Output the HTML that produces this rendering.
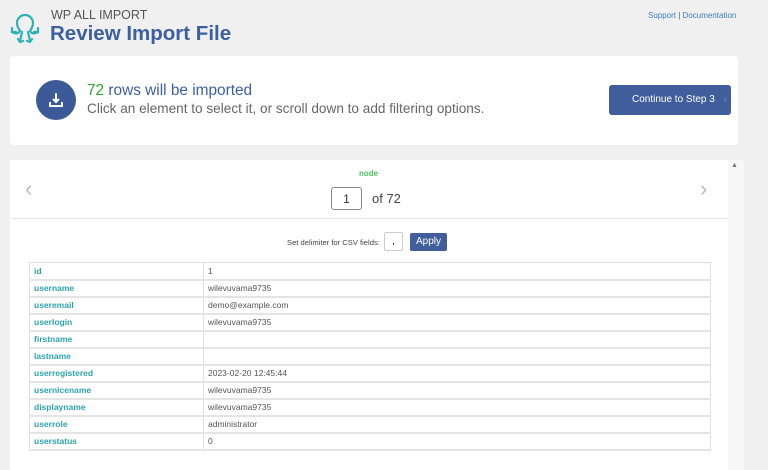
<!DOCTYPE html>
<html><head><meta charset="utf-8"><style>
*{margin:0;padding:0;box-sizing:border-box}
body{width:768px;height:465px;overflow:hidden;background:#f0f0f1;font-family:"Liberation Sans",sans-serif;position:relative}
.abs{position:absolute}
.p1{left:10px;top:56px;width:728px;height:89px;background:#fff;border-radius:4px}
.p2{left:10px;top:160px;width:718px;height:310px;background:#fff}
table{position:absolute;left:29px;top:262px;width:682px;border-collapse:collapse;font-size:8.5px}
td{height:17px;border:1px solid #e0e0e0;border-bottom:2px solid #e4e4e4;padding:0 4px;color:#555}
td:first-child{width:174px;color:#2ba3ad;font-weight:bold}
</style></head><body>
<svg class="abs" style="left:9px;top:9px" width="32" height="36" viewBox="0 0 32 36" fill="none" stroke="#2bb3b8" stroke-width="2.2" stroke-linecap="round">
<path d="M8 14a8 8 0 1 1 16 0c0 4-2 6-3 8M8 14c0 4 2 6 3 8"/><path d="M11 22c-2 3-5 3-8 1M21 22c2 3 5 3 8 1M13 23l-2 9M19 23l2 9"/><path d="M3 19v4h4M29 19v4h-4M9 30l2 3 3-1M23 30l-2 3-3-1"/>
</svg>
<div class="abs" style="left:51px;top:8px;font-size:12.5px;color:#555">WP ALL IMPORT</div>
<div class="abs" style="left:50px;top:22px;font-size:20.5px;font-weight:bold;color:#3c5fa0">Review Import File</div>
<div class="abs" style="left:648px;top:11px;font-size:8px;color:#3c7fc0">Support <span style="color:#555">|</span> Documentation</div>
<div class="abs p1"></div>
<div class="abs" style="left:36px;top:80px;width:40px;height:40px;border-radius:50%;background:#3c5a97"></div>
<svg class="abs" style="left:47px;top:91px" width="18" height="18" viewBox="0 0 18 18" fill="none" stroke="#fff" stroke-width="2"><path d="M9 2v9M6 8l3 3 3-3M3 11v4h12v-4"/></svg>
<div class="abs" style="left:87px;top:82px;font-size:15.4px;color:#3c5fa0"><span style="color:#2aa52e">72</span> rows will be imported</div>
<div class="abs" style="left:87px;top:101px;font-size:13.6px;color:#666">Click an element to select it, or scroll down to add filtering options.</div>
<div class="abs" style="left:609px;top:85px;width:122px;height:30px;background:#415e9c;border-radius:3px;color:#fff;font-size:10px;line-height:30px;padding-left:23px">Continue to Step 3 <span style="color:#7f95c3;margin-left:6px">›</span></div>
<div class="abs p2"></div>
<div class="abs" style="left:728px;top:160px;width:16px;height:310px;background:#f7f7f7"></div>
<div class="abs" style="left:731px;top:162px;font-size:7px;color:#777">▲</div>
<div class="abs" style="left:359px;top:169px;font-size:8px;font-weight:bold;color:#4bbf5a">node</div>
<div class="abs" style="left:25px;top:176px;font-size:22px;color:#bbb">‹</div>
<div class="abs" style="left:700px;top:176px;font-size:22px;color:#bbb">›</div>
<div class="abs" style="left:331px;top:187px;width:31px;height:23px;border:1px solid #888;border-radius:3px;font-size:12px;text-align:center;line-height:22px;color:#333">1</div>
<div class="abs" style="left:372px;top:191px;font-size:13px;color:#444">of 72</div>
<div class="abs" style="left:11px;top:218px;width:717px;height:1px;background:#e8e8e8"></div>
<div class="abs" style="left:287px;top:238px;font-size:7.6px;color:#444">Set delimiter for CSV fields:</div>
<div class="abs" style="left:384px;top:232px;width:19px;height:19px;border:1px solid #ccc;border-radius:2px;font-size:9px;text-align:center;line-height:16px">,</div>
<div class="abs" style="left:410px;top:233px;width:37px;height:18px;background:#415e9c;border-radius:2px;color:#fff;font-size:10px;text-align:center;line-height:18px">Apply</div>
<table>
<tr><td>id</td><td>1</td></tr>
<tr><td>username</td><td>wilevuvama9735</td></tr>
<tr><td>useremail</td><td>demo@example.com</td></tr>
<tr><td>userlogin</td><td>wilevuvama9735</td></tr>
<tr><td>firstname</td><td></td></tr>
<tr><td>lastname</td><td></td></tr>
<tr><td>userregistered</td><td>2023-02-20 12:45:44</td></tr>
<tr><td>usernicename</td><td>wilevuvama9735</td></tr>
<tr><td>displayname</td><td>wilevuvama9735</td></tr>
<tr><td>userrole</td><td>administrator</td></tr>
<tr><td>userstatus</td><td>0</td></tr>
</table>
</body></html>
